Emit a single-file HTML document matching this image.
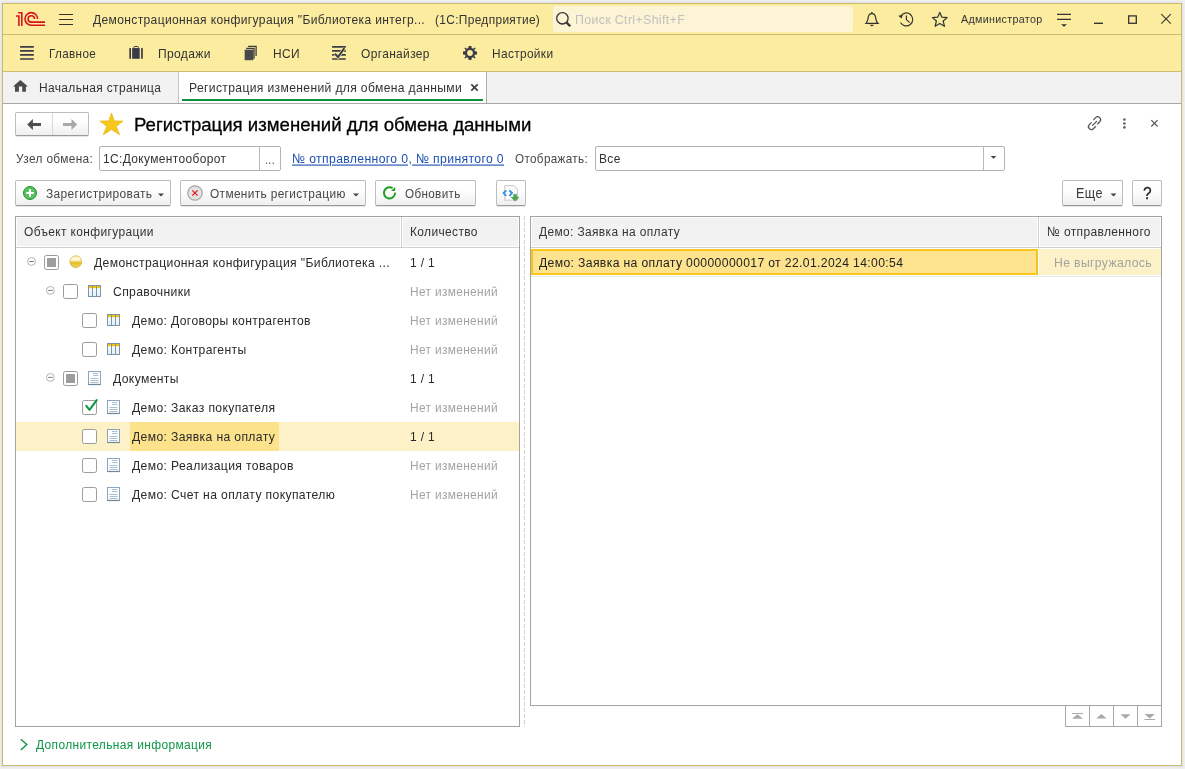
<!DOCTYPE html>
<html><head><meta charset="utf-8">
<style>
*{box-sizing:border-box}
html,body{margin:0;padding:0}
body{width:1185px;height:769px;overflow:hidden;position:relative;background:#f0f0f1;font-family:"Liberation Sans",sans-serif;font-size:12.6px;color:#333}
.a{position:absolute}
.t{position:absolute;white-space:nowrap;line-height:20px;height:20px;transform:scaleY(1.105);transform-origin:0 10px;will-change:transform}
#win{left:2px;top:3px;width:1180px;height:763px;border:1px solid #c7b96a;background:#fff;box-shadow:0 0 2px 1px rgba(90,90,130,0.10)}
#tb{left:3px;top:4px;width:1178px;height:31px;background:#fbeca0;border-bottom:1px solid #cdbd70}
#sb{left:3px;top:35px;width:1178px;height:37px;background:#fbeca0;border-bottom:1px solid #cdbd70}
#tabs{left:3px;top:72px;width:1178px;height:32px;background:#f2f2f2;border-bottom:1px solid #a8a8a8}
.btn{position:absolute;border:1px solid #bdbdbd;border-bottom-color:#9a9a9a;border-radius:2px;background:linear-gradient(#ffffff 0%,#fdfdfd 45%,#efefef 100%);box-shadow:0 1px 0 rgba(0,0,0,.10)}
.inp{position:absolute;border:1px solid #b3b3b3;border-radius:2px;background:#fff}
.grid{position:absolute;border:1px solid #a3a3a3;background:#fff}
.hdr{position:absolute;background:#f2f2f2;border-bottom:1px solid #d3d3d3}
.g{color:#a3a3a3}
</style></head><body>
<div id="win" class="a"></div>
<div id="tb" class="a"></div>
<div id="sb" class="a"></div>
<div id="tabs" class="a"></div>

<!-- search box -->
<div class="a" style="left:553px;top:6px;width:300px;height:26px;background:#fcf4d4;border-radius:3px"></div>

<!-- active tab -->
<div class="a" style="left:178px;top:72px;width:309px;height:31px;background:#fff;border-left:1px solid #c4c4c4;border-right:1px solid #acacac"></div>
<div class="a" style="left:182px;top:99px;width:301px;height:2px;background:#0f8f3e"></div>

<!-- form controls -->
<div class="btn" style="left:15px;top:112px;width:74px;height:24px"></div>
<div class="a" style="left:52px;top:113px;width:1px;height:22px;background:#d8d8d8"></div>

<div class="inp" style="left:99px;top:146px;width:182px;height:25px"></div>
<div class="a" style="left:259px;top:147px;width:1px;height:23px;background:#b8b8b8"></div>
<div class="inp" style="left:595px;top:146px;width:410px;height:25px"></div>
<div class="a" style="left:983px;top:147px;width:1px;height:23px;background:#b8b8b8"></div>

<div class="btn" style="left:15px;top:180px;width:156px;height:26px"></div>
<div class="btn" style="left:180px;top:180px;width:186px;height:26px"></div>
<div class="btn" style="left:375px;top:180px;width:101px;height:26px"></div>
<div class="btn" style="left:496px;top:180px;width:30px;height:26px"></div>
<div class="btn" style="left:1062px;top:180px;width:61px;height:26px"></div>
<div class="btn" style="left:1132px;top:180px;width:30px;height:26px"></div>

<!-- left grid -->
<div class="grid" style="left:15px;top:216px;width:505px;height:511px"></div>
<div class="a" style="left:16px;top:217px;width:503px;height:30px;background:#f2f2f2;border-bottom:1px solid #fff"></div>
<div class="a" style="left:16px;top:247px;width:503px;height:1px;background:#d0d0d0"></div>
<div class="a" style="left:16px;top:217px;width:503px;height:30px;border:1px solid #fff"></div>
<div class="a" style="left:400px;top:217px;width:3px;height:30px;background:#fff"></div>
<div class="a" style="left:401px;top:217px;width:1px;height:30px;background:#d2d2d2"></div>
<!-- highlighted row -->
<div class="a" style="left:16px;top:422px;width:503px;height:29px;background:#fdf1c7"></div>
<div class="a" style="left:130px;top:422px;width:149px;height:29px;background:#fde28c"></div>

<!-- splitter -->
<div class="a" style="left:524px;top:216px;width:1px;height:511px;background:repeating-linear-gradient(#d0d0d0 0 4px,transparent 4px 6px)"></div>

<!-- right grid -->
<div class="grid" style="left:530px;top:216px;width:632px;height:490px"></div>
<div class="a" style="left:531px;top:217px;width:630px;height:30px;background:#f2f2f2"></div>
<div class="a" style="left:531px;top:247px;width:630px;height:1px;background:#d0d0d0"></div>
<div class="a" style="left:531px;top:217px;width:630px;height:30px;border:1px solid #fff"></div>
<div class="a" style="left:1037px;top:217px;width:3px;height:30px;background:#fff"></div>
<div class="a" style="left:1038px;top:217px;width:1px;height:30px;background:#d2d2d2"></div>
<div class="a" style="left:1039px;top:249px;width:122px;height:26px;background:#fdf1c7"></div>
<div class="a" style="left:531px;top:276px;width:630px;height:1px;background:#e6e6e6"></div>
<div class="a" style="left:531px;top:249px;width:507px;height:26px;background:#fde38e;border:2px solid #f8c51c"></div>
<!-- bottom nav -->
<div class="a" style="left:1065px;top:706px;width:97px;height:21px;border:1px solid #a8a8a8;border-top:none;background:#fff"></div>
<div class="a" style="left:1089px;top:706px;width:1px;height:20px;background:#a8a8a8"></div>
<div class="a" style="left:1113px;top:706px;width:1px;height:20px;background:#a8a8a8"></div>
<div class="a" style="left:1137px;top:706px;width:1px;height:20px;background:#a8a8a8"></div>

<svg class="a" style="left:0;top:0" width="1185" height="769">
 <!-- 1C logo -->
 <g fill="none" stroke="#d5141c" stroke-width="1.6">
  <path d="M16,16 H18.9 V25.9"/>
  <path d="M18.1,12.7 H21.8 V25.9"/>
  <path d="M37.6,18.9 A6.3,6.3 0 1 0 31.3,25.2 H45"/>
  <path d="M34.5,18.9 A3.2,3.2 0 1 0 31.3,22.1 H45"/>
 </g>
 <!-- hamburger -->
 <g stroke="#333" stroke-width="1.2">
  <path d="M59,14.5 H73 M59,19.5 H73 M59,24.5 H73"/>
 </g>
 <!-- search -->
 <circle cx="562.4" cy="18.3" r="5.7" fill="none" stroke="#333" stroke-width="1.3"/>
 <path d="M566.6,22.6 L570.3,26.3" stroke="#333" stroke-width="2.2"/>
 <!-- bell -->
 <g fill="none" stroke="#333" stroke-width="1.2">
  <path d="M866,23.4 C868,21.5 868,19 868.3,17 C868.7,14.5 870,13.6 871.9,13.6 C873.8,13.6 875.1,14.5 875.5,17 C875.8,19 875.8,21.5 878,23.4 Z"/>
 </g>
 <circle cx="871.9" cy="12.8" r="0.9" fill="#333"/>
 <path d="M869.5,24.8 H874.3 L871.9,26.6 Z" fill="#333"/>
 <!-- history -->
 <g fill="none" stroke="#333" stroke-width="1.2">
  <path d="M900.6,16.2 A6.5,6.5 0 1 1 900.5,22.5"/>
  <path d="M906.4,15.5 V19.6 L909.6,22.6"/>
 </g>
 <path d="M898.2,15.8 L902.8,15 L901.5,18.6 Z" fill="#333"/>
 <!-- star outline -->
 <path d="M939.8,12.4 L941.9,17.2 L947.2,17.6 L943.2,21 L944.5,26.3 L939.8,23.4 L935.1,26.3 L936.4,21 L932.4,17.6 L937.7,17.2 Z" fill="none" stroke="#333" stroke-width="1.2" stroke-linejoin="round"/>
 <!-- filter -->
 <path d="M1057,14.3 H1071 M1057,19.4 H1071" stroke="#333" stroke-width="1.2"/>
 <path d="M1061,24.2 H1067 L1064,26.7 Z" fill="#333"/>
 <!-- minimize/maximize/close -->
 <path d="M1094,23.3 H1103" stroke="#333" stroke-width="1.4"/>
 <rect x="1128.7" y="15.9" width="7.6" height="7.4" fill="none" stroke="#333" stroke-width="1.3"/>
 <path d="M1161.3,14.2 L1170.8,23.7 M1170.8,14.2 L1161.3,23.7" stroke="#333" stroke-width="1.1"/>

 <!-- section icons -->
 <path d="M20.1,46.9 H33.8 M20.1,50.9 H33.8 M20.1,54.9 H33.8 M20.1,59 H33.8" stroke="#3b3b45" stroke-width="1.7"/>
 <!-- briefcase -->
 <g fill="#3b3b45">
  <rect x="129.3" y="48.1" width="1.7" height="10.7" rx="0.5"/>
  <rect x="141.1" y="48.1" width="1.7" height="10.7" rx="0.5"/>
  <rect x="132.1" y="48.1" width="7.6" height="10.7"/>
 </g>
 <rect x="133.8" y="46.5" width="4.6" height="2.2" rx="0.8" fill="none" stroke="#3b3b45" stroke-width="1"/>
 <!-- NSI -->
 <rect x="245.1" y="50.1" width="7.8" height="9.7" fill="#484848" stroke="#3b3b45" stroke-width="0.8"/>
 <path d="M246.1,48.3 H254 V58.8 M248.1,46.3 H256.1 V55.9" fill="none" stroke="#3b3b45" stroke-width="1.3"/>
 <!-- organizer -->
 <path d="M332.1,46.9 H345.8 M332.1,50.9 H345.8 M332.1,54.9 H345.8 M332.1,59 H345.8" stroke="#3b3b45" stroke-width="1.7"/>
 <path d="M334.9,53.7 L338,57.2 L344.3,48.1" fill="none" stroke="#fbeca0" stroke-width="3.2"/>
 <path d="M334.9,53.7 L338,57.2 L344.3,48.1" fill="none" stroke="#3b3b45" stroke-width="1.9"/>
 <!-- gear -->
 <g transform="translate(470,53)" fill="#3b3b45">
  <path fill-rule="evenodd" d="M-1.4,-7 H1.4 L1.7,-4.9 L3.1,-4.3 L4.8,-5.6 L5.6,-4.8 L4.3,-3.1 L4.9,-1.7 L7,-1.4 V1.4 L4.9,1.7 L4.3,3.1 L5.6,4.8 L4.8,5.6 L3.1,4.3 L1.7,4.9 L1.4,7 H-1.4 L-1.7,4.9 L-3.1,4.3 L-4.8,5.6 L-5.6,4.8 L-4.3,3.1 L-4.9,1.7 L-7,1.4 V-1.4 L-4.9,-1.7 L-4.3,-3.1 L-5.6,-4.8 L-4.8,-5.6 L-3.1,-4.3 L-1.7,-4.9 Z M0,-2.9 A2.9,2.9 0 1 0 0,2.9 A2.9,2.9 0 1 0 0,-2.9 Z"/>
 </g>
 <!-- home -->
 <path d="M20.4,80 L27.9,86.6 H25.9 V91.7 H22.2 V86.6 H18.9 V91.7 H15 V86.6 H13 Z" fill="#4a4a4a"/>
 <!-- tab close -->
 <path d="M471.3,84.4 L477.7,90.6 M477.7,84.4 L471.3,90.6" stroke="#444" stroke-width="1.8"/>

 <!-- nav arrows -->
 <path d="M27.2,124.4 L32.9,119.1 V122.9 H41 V125.9 H32.9 V129.9 Z" fill="#505050"/>
 <path d="M77.2,124.4 L71.5,119.1 V122.9 H63 V125.9 H71.5 V129.9 Z" fill="#a9a9a9"/>
 <!-- yellow star -->
 <path d="M111.5,113.1 L114.3,120.9 L123.1,121.1 L116.2,126.3 L119.7,134.8 L111.5,129.5 L103.3,134.8 L106.8,126.3 L99.9,121.1 L108.7,120.9 Z" fill="#f6c81e" stroke="#e5b400" stroke-width="0.7" stroke-linejoin="round"/>
 <!-- link icon -->
 <g fill="none" stroke="#555" stroke-width="1.3" stroke-linecap="round">
  <path d="M1093.6,119.6 L1095.6,117.6 A2.9,2.9 0 0 1 1099.7,121.7 L1097.7,123.7"/>
  <path d="M1091.3,122.6 L1089.3,124.6 A2.9,2.9 0 0 0 1093.4,128.7 L1095.4,126.7"/>
  <path d="M1092.6,125.4 L1096.6,121.4"/>
 </g>
 <!-- kebab -->
 <g fill="#666"><circle cx="1124.4" cy="119.5" r="1.35"/><circle cx="1124.4" cy="123.5" r="1.35"/><circle cx="1124.4" cy="127.4" r="1.35"/></g>
 <path d="M1151.3,120.2 L1157.6,126.5 M1157.6,120.2 L1151.3,126.5" stroke="#555" stroke-width="1.2"/>
 <!-- select dropdown -->
 <path d="M990.6,156 H996.4 L993.5,158.8 Z" fill="#444"/>

 <!-- plus -->
 <circle cx="30" cy="193" r="6.5" fill="#5bbf63" stroke="#17952a" stroke-width="1"/>
 <path d="M26.2,193 H33.8 M30,189.2 V196.8" stroke="#fff" stroke-width="2"/>
 <path d="M158,193.6 H164 L161,196.6 Z" fill="#444"/>
 <!-- cancel -->
 <circle cx="195" cy="193" r="7.2" fill="#e3e3e3" stroke="#a3a3a3" stroke-width="1.2"/>
 <path d="M192.3,190.4 L197.6,195.6 M197.6,190.4 L192.3,195.6" stroke="#e8141c" stroke-width="1.2"/>
 <path d="M353,193.6 H359 L356,196.6 Z" fill="#444"/>
 <!-- refresh -->
 <path d="M392.6,188.2 A5.6,5.6 0 1 0 395.1,192.6" fill="none" stroke="#1f9f22" stroke-width="2"/>
 <path d="M395.1,186.9 V191 H391 Z" fill="#1f9f22"/>
 <!-- icon button doc -->
 <path d="M504.8,185.6 H513.8 L517.4,189.2 V200.2 H504.8 Z" fill="#fafafa" stroke="#c8c8c8" stroke-width="1"/>
 <path d="M506.2,190.4 L503.6,193.1 L506.2,195.8" fill="none" stroke="#3b8ee0" stroke-width="1.9"/>
 <path d="M509.4,190.4 L512,193.1 L509.4,195.8" fill="none" stroke="#3b8ee0" stroke-width="1.9"/>
 <path d="M513.7,194.4 H516.5 V197.3 H519 L515.1,200.9 L511.2,197.3 H513.7 Z" fill="#4aa84e" stroke="#2e8a32" stroke-width="0.5"/>
 <!-- Еще dropdown -->
 <path d="M1110.5,193.6 H1116.5 L1113.5,196.6 Z" fill="#444"/>

 <!-- tree row 0 -->
 <circle cx="31.5" cy="261.5" r="3.9" fill="#fff" stroke="#aaa" stroke-width="0.9"/>
 <path d="M29.3,261.5 H33.8" stroke="#666" stroke-width="0.9"/>
 <rect x="44.5" y="255.5" width="14" height="14" rx="1.8" fill="#fff" stroke="#9c9c9c" stroke-width="1"/>
 <rect x="47" y="258" width="9" height="9" rx="0.6" fill="#9d9d9d"/>
 <defs>
  <linearGradient id="ball" x1="0" y1="0" x2="0" y2="1">
   <stop offset="0" stop-color="#fdf3b0"/><stop offset="0.3" stop-color="#fffbe6"/><stop offset="0.48" stop-color="#f3dc80"/><stop offset="0.55" stop-color="#e6bf2e"/><stop offset="1" stop-color="#f0cf58"/>
  </linearGradient>
  <linearGradient id="col" x1="0" y1="0" x2="0" y2="1">
   <stop offset="0" stop-color="#ffffff"/><stop offset="1" stop-color="#dff0fb"/>
  </linearGradient>
 </defs>
 <circle cx="75.8" cy="261.7" r="5.9" fill="url(#ball)" stroke="#d8b23a" stroke-width="0.8"/>

 <!-- row 1 Справочники -->
 <circle cx="50.4" cy="290.4" r="3.9" fill="#fff" stroke="#aaa" stroke-width="0.9"/>
 <path d="M48.2,290.4 H52.7" stroke="#666" stroke-width="0.9"/>
 <rect x="63.5" y="284.5" width="14" height="14" rx="1.8" fill="#fff" stroke="#9c9c9c" stroke-width="1"/>
 <g id="cat">
  <rect x="88.5" y="285.5" width="12" height="11" fill="url(#col)" stroke="#7d94aa" stroke-width="1"/>
  <path d="M92.5,285.5 V296.5 M96.5,285.5 V296.5" stroke="#7d94aa" stroke-width="1"/>
  <rect x="89" y="286" width="3" height="2.2" fill="#f4c400"/>
  <rect x="93" y="286" width="3" height="2.2" fill="#f4c400"/>
  <rect x="97" y="286" width="3" height="2.2" fill="#f4c400"/>
 </g>
 <!-- row 2,3 catalogs -->
 <rect x="82.5" y="313.5" width="14" height="14" rx="1.8" fill="#fff" stroke="#9c9c9c" stroke-width="1"/>
 <use href="#cat" transform="translate(19,29)"/>
 <rect x="82.5" y="342.5" width="14" height="14" rx="1.8" fill="#fff" stroke="#9c9c9c" stroke-width="1"/>
 <use href="#cat" transform="translate(19,58)"/>
 <!-- row 4 Документы -->
 <circle cx="50.4" cy="377.4" r="3.9" fill="#fff" stroke="#aaa" stroke-width="0.9"/>
 <path d="M48.2,377.4 H52.7" stroke="#666" stroke-width="0.9"/>
 <rect x="63.5" y="371.5" width="14" height="14" rx="1.8" fill="#fff" stroke="#9c9c9c" stroke-width="1"/>
 <rect x="66" y="374" width="9" height="9" rx="0.6" fill="#9d9d9d"/>
 <g id="doc">
  <rect x="88.5" y="371.5" width="12" height="13" fill="#fbfdff" stroke="#8aa5bd" stroke-width="1"/>
  <path d="M88.5,384.5 H100.5" stroke="#6e8699" stroke-width="1.2"/>
  <path d="M93,373.5 H98.5 M93,375.5 H98.5 M90.5,378.5 H98.5 M90.5,380.5 H98.5 M90.5,382.5 H98.5" stroke="#aebfcf" stroke-width="1"/>
 </g>
 <!-- row 5 checked -->
 <rect x="82.5" y="400.5" width="14" height="14" rx="1.8" fill="#fff" stroke="#9c9c9c" stroke-width="1"/>
 <path d="M86.3,405.9 L89.5,409.8 L96.7,400.1" fill="none" stroke="#0d9a47" stroke-width="2.1" stroke-linecap="round" stroke-linejoin="round"/>
 <use href="#doc" transform="translate(19,29)"/>
 <!-- row 6 highlighted -->
 <rect x="82.5" y="429.5" width="14" height="14" rx="1.8" fill="#fff" stroke="#9c9c9c" stroke-width="1"/>
 <use href="#doc" transform="translate(19,58)"/>
 <rect x="82.5" y="458.5" width="14" height="14" rx="1.8" fill="#fff" stroke="#9c9c9c" stroke-width="1"/>
 <use href="#doc" transform="translate(19,87)"/>
 <rect x="82.5" y="487.5" width="14" height="14" rx="1.8" fill="#fff" stroke="#9c9c9c" stroke-width="1"/>
 <use href="#doc" transform="translate(19,116)"/>

 <!-- bottom nav icons -->
 <g fill="#aaa">
  <path d="M1072,718.8 L1077.5,714.3 L1083,718.8 Z"/><path d="M1072,713.5 H1083" stroke="#aaa" stroke-width="1"/>
  <path d="M1096.2,718.6 L1101.4,714 L1106.6,718.6 Z"/>
  <path d="M1120.3,714.2 L1125.5,718.8 L1130.7,714.2 Z"/>
  <path d="M1144.5,714 L1149.7,718.4 L1154.9,714 Z"/><path d="M1144.5,719.5 H1155" stroke="#aaa" stroke-width="1"/>
 </g>
 <!-- chevron -->
 <path d="M20.8,739.3 L26.8,744.6 L20.8,749.9" fill="none" stroke="#0e9547" stroke-width="1.4"/>
</svg>

<!-- title text -->
<div class="t" style="left:93px;top:9.5px;font-size:12.05px;letter-spacing:0.355px">Демонстрационная конфигурация "Библиотека интегр...</div>
<div class="t" style="left:435px;top:9.5px;font-size:11.88px;letter-spacing:0.35px">(1С:Предприятие)</div>
<div class="t" style="left:575px;top:9.5px;color:#c0c0c0;font-size:12.35px;letter-spacing:0.364px">Поиск Ctrl+Shift+F</div>
<div class="t" style="left:961px;top:8.5px;font-size:10.73px;letter-spacing:0.316px;transform:scaleY(1.0)">Администратор</div>

<!-- sections -->
<div class="t" style="left:49px;top:44px;font-size:11.69px;letter-spacing:0.344px">Главное</div>
<div class="t" style="left:158px;top:44px;font-size:12.06px;letter-spacing:0.356px">Продажи</div>
<div class="t" style="font-size:11.97px;letter-spacing:0.353px;left:273px;top:44px;">НСИ</div>
<div class="t" style="font-size:11.97px;letter-spacing:0.353px;left:361px;top:44px;">Органайзер</div>
<div class="t" style="left:492px;top:44px;font-size:11.88px;letter-spacing:0.35px">Настройки</div>

<!-- tabs -->
<div class="t" style="font-size:11.97px;letter-spacing:0.353px;left:39px;top:78px;">Начальная страница</div>
<div class="t" style="left:189px;top:78px;font-size:12.11px;letter-spacing:0.357px">Регистрация изменений для обмена данными</div>

<!-- form title -->
<div class="t" style="left:134px;top:113px;font-size:18.6px;line-height:24px;height:24px;color:#000;-webkit-text-stroke:0.3px #000;transform:none">Регистрация изменений для обмена данными</div>

<div class="t" style="left:16px;top:149px;font-size:11.88px;letter-spacing:0.35px;color:#474747">Узел обмена:</div>
<div class="t" style="font-size:11.97px;letter-spacing:0.353px;left:103px;top:149px">1С:Документооборот</div>
<div class="t" style="left:265px;top:150px;font-size:10.92px;letter-spacing:0.322px;color:#555">...</div>
<div class="t" style="left:292px;top:149px;color:#1c50b0;text-decoration:underline;font-size:12.21px;letter-spacing:0.36px">№ отправленного 0, № принятого 0</div>
<div class="t" style="left:515px;top:149px;font-size:11.69px;letter-spacing:0.344px;color:#474747">Отображать:</div>
<div class="t" style="font-size:11.97px;letter-spacing:0.353px;left:599px;top:149px">Все</div>

<div class="t" style="font-size:11.97px;letter-spacing:0.353px;left:46px;top:184px;color:#474747">Зарегистрировать</div>
<div class="t" style="left:210px;top:184px;font-size:11.88px;letter-spacing:0.35px;color:#474747">Отменить регистрацию</div>
<div class="t" style="left:405px;top:184px;font-size:11.69px;letter-spacing:0.344px;color:#474747">Обновить</div>
<div class="t" style="left:1076px;top:184px;font-size:12.63px;letter-spacing:0.372px;color:#3a3a3a">Еще</div>
<div class="t" style="left:1143px;top:183px;font-size:15.5px;color:#222;-webkit-text-stroke:0.25px #222">?</div>

<!-- left grid text -->
<div class="t" style="font-size:11.97px;letter-spacing:0.353px;left:24px;top:222px">Объект конфигурации</div>
<div class="t" style="font-size:11.97px;letter-spacing:0.353px;left:410px;top:222px">Количество</div>
<div class="t" style="font-size:12.16px;letter-spacing:0.358px;color:#2a2a2a;left:94px;top:253px">Демонстрационная конфигурация "Библиотека ...</div>
<div class="t" style="font-size:11.97px;letter-spacing:0.353px;color:#2a2a2a;left:410px;top:253px">1 / 1</div>
<div class="t" style="font-size:12.16px;letter-spacing:0.358px;color:#2a2a2a;left:113px;top:282px">Справочники</div>
<div class="t g" style="font-size:11.88px;letter-spacing:0.35px;left:410px;top:282px">Нет изменений</div>
<div class="t" style="font-size:12.16px;letter-spacing:0.358px;color:#2a2a2a;left:132px;top:311px">Демо: Договоры контрагентов</div>
<div class="t g" style="font-size:11.88px;letter-spacing:0.35px;left:410px;top:311px">Нет изменений</div>
<div class="t" style="font-size:12.16px;letter-spacing:0.358px;color:#2a2a2a;left:132px;top:340px">Демо: Контрагенты</div>
<div class="t g" style="font-size:11.88px;letter-spacing:0.35px;left:410px;top:340px">Нет изменений</div>
<div class="t" style="font-size:12.16px;letter-spacing:0.358px;color:#2a2a2a;left:113px;top:369px">Документы</div>
<div class="t" style="font-size:11.97px;letter-spacing:0.353px;color:#2a2a2a;left:410px;top:369px">1 / 1</div>
<div class="t" style="font-size:12.16px;letter-spacing:0.358px;color:#2a2a2a;left:132px;top:398px">Демо: Заказ покупателя</div>
<div class="t g" style="font-size:11.88px;letter-spacing:0.35px;left:410px;top:398px">Нет изменений</div>
<div class="t" style="font-size:12.16px;letter-spacing:0.358px;color:#2a2a2a;left:132px;top:427px">Демо: Заявка на оплату</div>
<div class="t" style="font-size:11.97px;letter-spacing:0.353px;color:#2a2a2a;left:410px;top:427px">1 / 1</div>
<div class="t" style="font-size:12.16px;letter-spacing:0.358px;color:#2a2a2a;left:132px;top:456px">Демо: Реализация товаров</div>
<div class="t g" style="font-size:11.88px;letter-spacing:0.35px;left:410px;top:456px">Нет изменений</div>
<div class="t" style="font-size:12.16px;letter-spacing:0.358px;color:#2a2a2a;left:132px;top:485px">Демо: Счет на оплату покупателю</div>
<div class="t g" style="font-size:11.88px;letter-spacing:0.35px;left:410px;top:485px">Нет изменений</div>

<!-- right grid text -->
<div class="t" style="font-size:11.97px;letter-spacing:0.353px;left:539px;top:222px">Демо: Заявка на оплату</div>
<div class="t" style="left:1047px;top:222px;font-size:12.02px;letter-spacing:0.354px">№ отправленного</div>
<div class="t" style="left:539px;top:253px;font-size:12.18px;letter-spacing:0.359px;color:#222">Демо: Заявка на оплату 00000000017 от 22.01.2024 14:00:54</div>
<div class="t g" style="left:1054px;top:253px;font-size:12.2px;letter-spacing:0.36px">Не выгружалось</div>

<div class="t" style="font-size:11.97px;letter-spacing:0.353px;left:36px;top:735px;color:#0e9547">Дополнительная информация</div>
</body></html>
